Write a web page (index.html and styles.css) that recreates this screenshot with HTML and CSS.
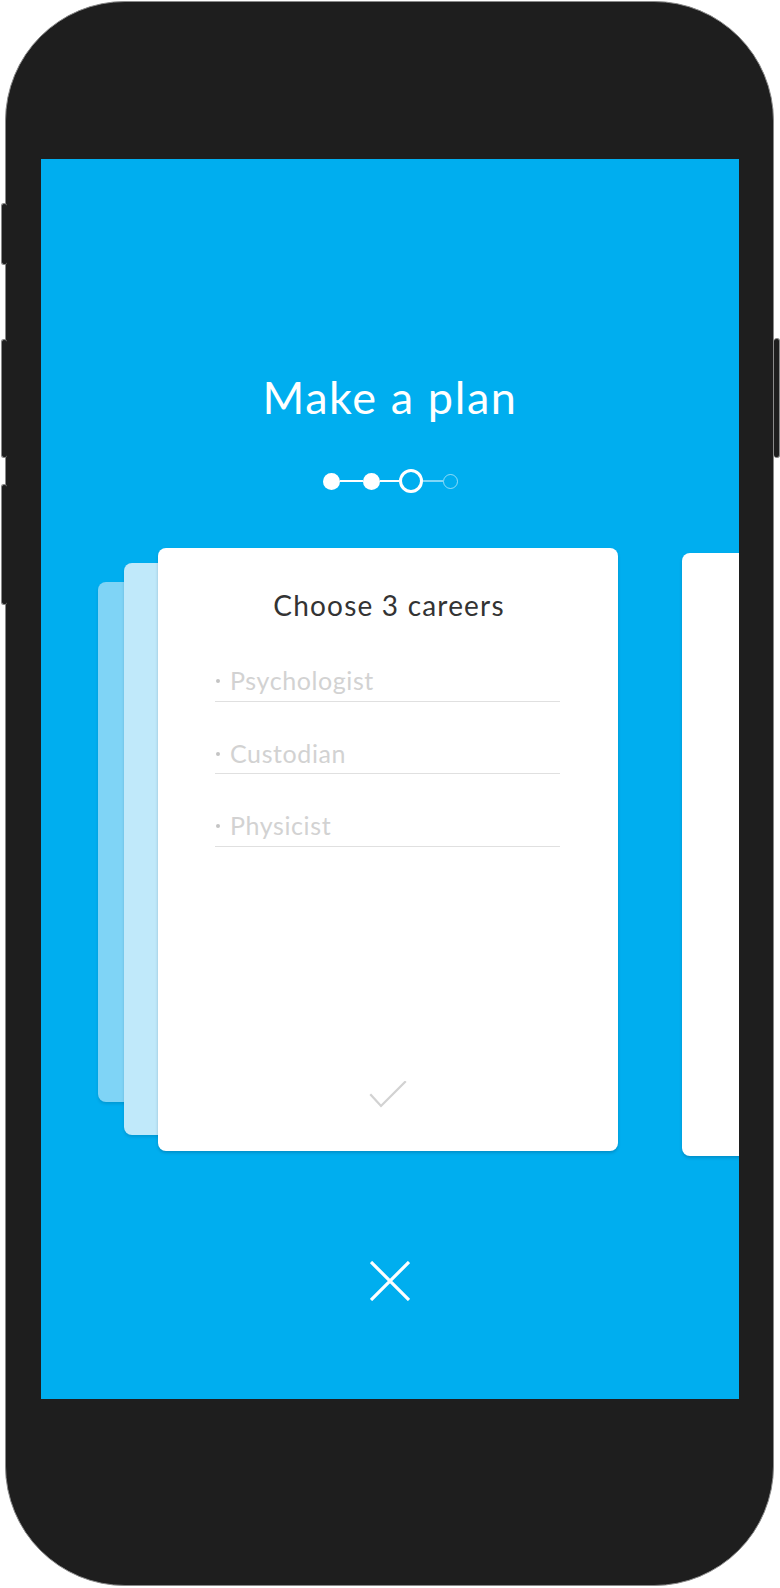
FILE: index.html
```html
<!DOCTYPE html>
<html lang="en">
<head>
<meta charset="utf-8">
<title>Make a plan</title>
<link rel="stylesheet" href="styles.css">
</head>
<body>
<div class="phone">
  <span class="side-btn left-1"></span>
  <span class="side-btn left-2"></span>
  <span class="side-btn left-3"></span>
  <span class="side-btn right-1"></span>
  <div class="screen">
    <h1 class="title">Make a plan</h1>
    <div class="stepper">
      <span class="dot filled"></span>
      <span class="link l1"></span>
      <span class="dot filled"></span>
      <span class="link l2"></span>
      <span class="dot current"></span>
      <span class="link l3 faint"></span>
      <span class="dot pending"></span>
    </div>
    <div class="cards">
      <div class="deck">
        <div class="ghost ghost-back"></div>
        <div class="ghost ghost-mid"></div>
        <div class="card main-card">
          <h2 class="card-title">Choose 3 careers</h2>
          <ul class="choices">
            <li class="choice">Psychologist</li>
            <li class="choice">Custodian</li>
            <li class="choice">Physicist</li>
          </ul>
          <div class="confirm">
            <svg width="40" height="30" viewBox="0 0 40 30"><path d="M3 14 L13 25 L37 1" fill="none" stroke="#d2d2d2" stroke-width="2.2" stroke-linecap="square"/></svg>
          </div>
        </div>
      </div>
      <div class="card next-card"></div>
    </div>
    <div class="close">
      <svg width="40" height="40" viewBox="0 0 40 40"><path d="M1 1 L39 39 M39 1 L1 39" fill="none" stroke="#ffffff" stroke-width="3.2"/></svg>
    </div>
  </div>
</div>
</body>
</html>
```
FILE: styles.css
```css
* { box-sizing: border-box; }
html, body { margin: 0; padding: 0; background: #ffffff; }
body { width: 780px; height: 1588px; overflow: hidden; font-family: "Lato", "Open Sans", sans-serif; }

.phone {
  position: relative;
  margin: 1px 0 0 5px;
  width: 769px;
  height: 1585px;
  background: #1e1e1e;
  border: 1px solid #8a8a8a;
  border-radius: 120px;
  padding: 157px 0 0 35px;
}
.side-btn {
  position: absolute;
  width: 6px;
  background: #1e1e1e;
  border: 1px solid #8a8a8a;
  border-radius: 3px;
}
.left-1 { left: -5px; top: 201px; height: 62px; border-right: none; }
.left-2 { left: -5px; top: 337px; height: 119px; border-right: none; }
.left-3 { left: -5px; top: 482px; height: 121px; border-right: none; }
.right-1 { right: -7px; top: 336px; height: 120px; border-left: none; }

.screen {
  width: 698px;
  height: 1240px;
  background: #00aeef;
  overflow: hidden;
  padding-top: 211px;
}
.title {
  margin: 0;
  font-family: "Lato", sans-serif;
  font-weight: 400;
  font-size: 45px;
  line-height: 54px;
  letter-spacing: 1.6px;
  color: #ffffff;
  text-align: center;
}
.stepper {
  margin-top: 45px;
  height: 24px;
  display: flex;
  align-items: center;
  justify-content: center;
  padding-left: 1px;
}
.dot { display: block; border-radius: 50%; flex-shrink: 0; }
.dot.filled { width: 17px; height: 17px; background: #ffffff; }
.dot.current { width: 24px; height: 24px; border: 3.5px solid #ffffff; }
.dot.pending { width: 15px; height: 15px; border: 1.5px solid rgba(255,255,255,0.55); }
.link { display: block; height: 2px; background: #ffffff; flex-shrink: 0; }
.link.l1 { width: 23px; }
.link.l2 { width: 19px; }
.link.l3 { width: 20px; }
.link.faint { background: rgba(255,255,255,0.5); height: 1.5px; }

.cards {
  margin-top: 55px;
  display: flex;
  align-items: flex-start;
  gap: 64px;
  padding-left: 117px;
}
.deck { position: relative; flex-shrink: 0; }
.card {
  background: #ffffff;
  border-radius: 8px;
  box-shadow: 0 2px 3px rgba(0, 60, 100, 0.25);
  flex-shrink: 0;
}
.ghost {
  position: absolute;
  border-radius: 8px;
  box-shadow: 0 2px 3px rgba(0, 60, 100, 0.18);
}
.ghost-back { left: -60px; top: 34px; width: 200px; height: 520px; background: #7fd4f6; }
.ghost-mid { left: -34px; top: 15px; width: 200px; height: 572px; background: #c0e9fa; }

.main-card {
  position: relative;
  width: 460px;
  height: 603px;
  padding: 40px 58px 40px 57px;
  display: flex;
  flex-direction: column;
}
.card-title {
  margin: 0;
  font-family: "Lato", sans-serif;
  font-weight: 400;
  font-size: 28px;
  line-height: 34px;
  letter-spacing: 1.2px;
  color: #333333;
  text-align: center;
  padding-left: 3px;
}
.choices { list-style: none; margin: 43px 0 0; padding: 0; }
.choice {
  display: flex;
  align-items: center;
  font-size: 25px;
  line-height: 30px;
  letter-spacing: 0.6px;
  color: #d2d2d2;
  padding-bottom: 5.5px;
  border-bottom: 1.5px solid #e0e0e0;
  margin-bottom: 36px;
}
.choice::before {
  content: "";
  width: 4px;
  height: 4px;
  border-radius: 50%;
  background: #c4c4c4;
  margin: 2px 10px 0 1px;
  flex-shrink: 0;
}
.confirm {
  margin-top: auto;
  display: flex;
  justify-content: center;
  padding-left: 1px;
}
.next-card {
  width: 460px;
  height: 603px;
  margin-top: 5px;
}
.close {
  margin-top: 105px;
  display: flex;
  justify-content: center;
}
.close svg { display: block; }
```
